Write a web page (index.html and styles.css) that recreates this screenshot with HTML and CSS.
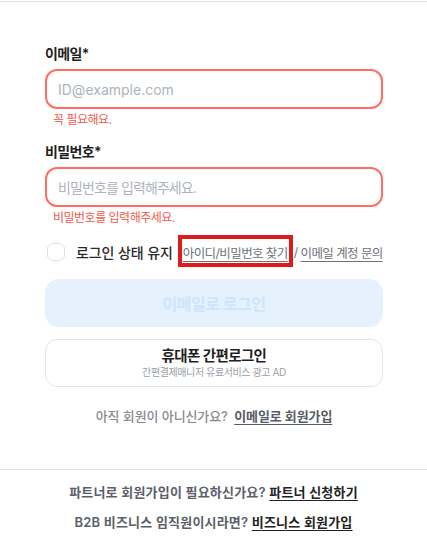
FILE: index.html
```html
<!DOCTYPE html>
<html lang="ko">
<head>
<meta charset="utf-8">
<title>로그인</title>
<link rel="stylesheet" href="styles.css">
</head>
<body>
<div class="page">
  <form class="form">
    <div class="field">
      <label class="label">이메일*</label>
      <div class="input"><span class="placeholder">ID@example.com</span></div>
      <p class="error">꼭 필요해요.</p>
    </div>
    <div class="field field-pw">
      <label class="label">비밀번호*</label>
      <div class="input"><span class="placeholder">비밀번호를 입력해주세요.</span></div>
      <p class="error">비밀번호를 입력해주세요.</p>
    </div>
    <div class="options">
      <span class="checkbox"></span>
      <span class="keep">로그인 상태 유지</span>
      <span class="links">
        <a class="link marked">아이디/비밀번호 찾기</a>
        <span class="slash">/</span>
        <a class="link">이메일 계정 문의</a>
      </span>
    </div>
    <div class="btn-login">이메일로 로그인</div>
    <div class="btn-phone">
      <span class="phone-title">휴대폰 간편로그인</span>
      <span class="phone-sub">간편결제매니저 유료서비스 광고 AD</span>
    </div>
    <p class="signup">아직 회원이 아니신가요? <a class="signup-link">이메일로 회원가입</a></p>
  </form>
  <div class="footer">
    <p class="foot-line">파트너로 회원가입이 필요하신가요? <a class="foot-link">파트너 신청하기</a></p>
    <p class="foot-line">B2B 비즈니스 임직원이시라면? <a class="foot-link">비즈니스 회원가입</a></p>
  </div>
</div>
</body>
</html>
```
FILE: styles.css
```css
* { box-sizing: border-box; }
html, body { margin: 0; padding: 0; background: #fff; }
body {
  font-family: "Inter", "Noto Sans CJK KR", sans-serif;
  color: #222;
  padding-top: 1px;
}
.page {
  border-top: 1px solid #e4e4e4;
  width: 427px;
}
.form {
  padding: 42px 44px 0 45px;
  display: flex;
  flex-direction: column;
}
.field { display: flex; flex-direction: column; }
.field-pw { margin-top: 14px; }
.label {
  font-size: 14px;
  line-height: 20px;
  font-weight: 600;
  color: #1f1f1f;
  letter-spacing: -0.6px;
}
.input {
  margin-top: 5px;
  height: 40px;
  border: 2px solid #ff6e60;
  border-radius: 12px;
  display: flex;
  align-items: center;
  padding-left: 11px;
}
.placeholder {
  font-size: 14px;
  color: #adb3bb;
  letter-spacing: 0;
}
.field-pw .placeholder { letter-spacing: -0.9px; }
.error {
  margin: 3px 0 0 8px;
  font-size: 12px;
  line-height: 16px;
  color: #f5594a;
  letter-spacing: -0.5px;
}
.options {
  margin-top: 15px;
  height: 22px;
  display: flex;
  align-items: center;
}
.checkbox {
  width: 18px;
  height: 18px;
  border: 1px solid #dcdfe3;
  border-radius: 6px;
  margin-left: 2px;
}
.keep {
  margin-left: 11px;
  font-size: 14px;
  color: #2a2a2a;
  letter-spacing: -0.1px;
  font-weight: 500;
}
.links {
  margin-left: 10px;
  display: flex;
  align-items: center;
  font-size: 12.5px;
  color: #6d7178;
  letter-spacing: -0.6px;
}
.link {
  text-decoration: underline;
  text-underline-offset: 3px;
  color: #6d7178;
}
.slash { margin: 0 3px 0 6px; }
.marked { position: relative; }
.marked::after {
  content: "";
  position: absolute;
  left: -5px;
  right: -5px;
  top: -8px;
  bottom: -5px;
  border: 4px solid #e01a1a;
}
.btn-login {
  margin-top: 16px;
  height: 48px;
  border-radius: 14px;
  background: #e5f2fd;
  color: #cde5fa;
  font-size: 16px;
  font-weight: 700;
  display: flex;
  align-items: center;
  justify-content: center;
  letter-spacing: -0.5px;
}
.btn-phone {
  margin-top: 12px;
  height: 48px;
  border: 1px solid #e5e5e7;
  border-radius: 12px;
  display: flex;
  flex-direction: column;
  align-items: center;
  justify-content: center;
}
.phone-title {
  font-size: 14.5px;
  line-height: 18px;
  font-weight: 700;
  color: #1f1f1f;
  letter-spacing: -0.6px;
}
.phone-sub {
  font-size: 10px;
  line-height: 14px;
  color: #9a9ea5;
  letter-spacing: -0.4px;
}
.signup {
  margin: 20px 0 0;
  text-align: center;
  font-size: 13px;
  line-height: 18px;
  color: #878b92;
  letter-spacing: -0.1px;
  font-weight: 500;
}
.signup-link {
  margin-left: 3px;
  color: #575c64;
  font-weight: 600;
  text-decoration: underline;
  text-underline-offset: 3px;
}
.footer {
  margin-top: 44px;
  border-top: 1px solid #e2e3e7;
  padding-top: 13px;
  display: flex;
  flex-direction: column;
  gap: 12px;
}
.foot-line {
  margin: 0;
  text-align: center;
  font-size: 13px;
  line-height: 18px;
  color: #5b6068;
  font-weight: 600;
  letter-spacing: 0.2px;
}
.foot-link {
  color: #222;
  text-decoration: underline;
  text-underline-offset: 3px;
}
```
